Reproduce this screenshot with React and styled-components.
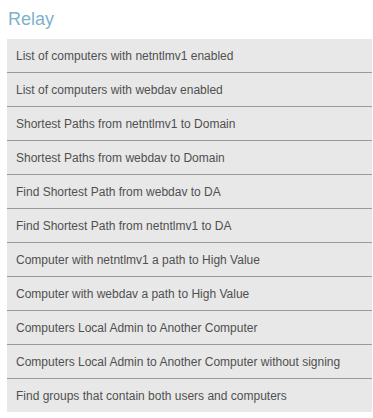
import styled, { createGlobalStyle } from "styled-components";

const GlobalStyle = createGlobalStyle`
  html, body {
    margin: 0;
    padding: 0;
    background: #ffffff;
  }
`;

const queries = [
  "List of computers with netntlmv1 enabled",
  "List of computers with webdav enabled",
  "Shortest Paths from netntlmv1 to Domain",
  "Shortest Paths from webdav to Domain",
  "Find Shortest Path from webdav to DA",
  "Find Shortest Path from netntlmv1 to DA",
  "Computer with netntlmv1 a path to High Value",
  "Computer with webdav a path to High Value",
  "Computers Local Admin to Another Computer",
  "Computers Local Admin to Another Computer without signing",
  "Find groups that contain both users and computers",
];

function App() {
  return (
    <Wrapper>
      <GlobalStyle />
      <Title>Relay</Title>
      <QueryList>
        {queries.map((q) => (
          <QueryItem key={q}>{q}</QueryItem>
        ))}
      </QueryList>
    </Wrapper>
  );
}

export default App;

const Wrapper = styled.div`
  padding: 7px 1px 0 7px;
  font-family: "Liberation Sans", Arial, sans-serif;
`;

const Title = styled.h3`
  margin: 0;
  padding-left: 1px;
  height: 32px;
  font-family: "Liberation Sans", Arial, sans-serif;
  font-weight: 400;
  font-size: 18px;
  line-height: 24px;
  color: #7eb1cb;
`;

const QueryList = styled.ul`
  margin: 0;
  padding: 0;
  list-style: none;
  background: #e8e8e8;
`;

const QueryItem = styled.li`
  height: 33px;
  padding-left: 9px;
  display: flex;
  align-items: center;
  font-size: 12px;
  color: #505050;
  border-bottom: 1px solid #9a9a9a;
  cursor: pointer;

  &:last-child {
    border-bottom: none;
  }
`;
